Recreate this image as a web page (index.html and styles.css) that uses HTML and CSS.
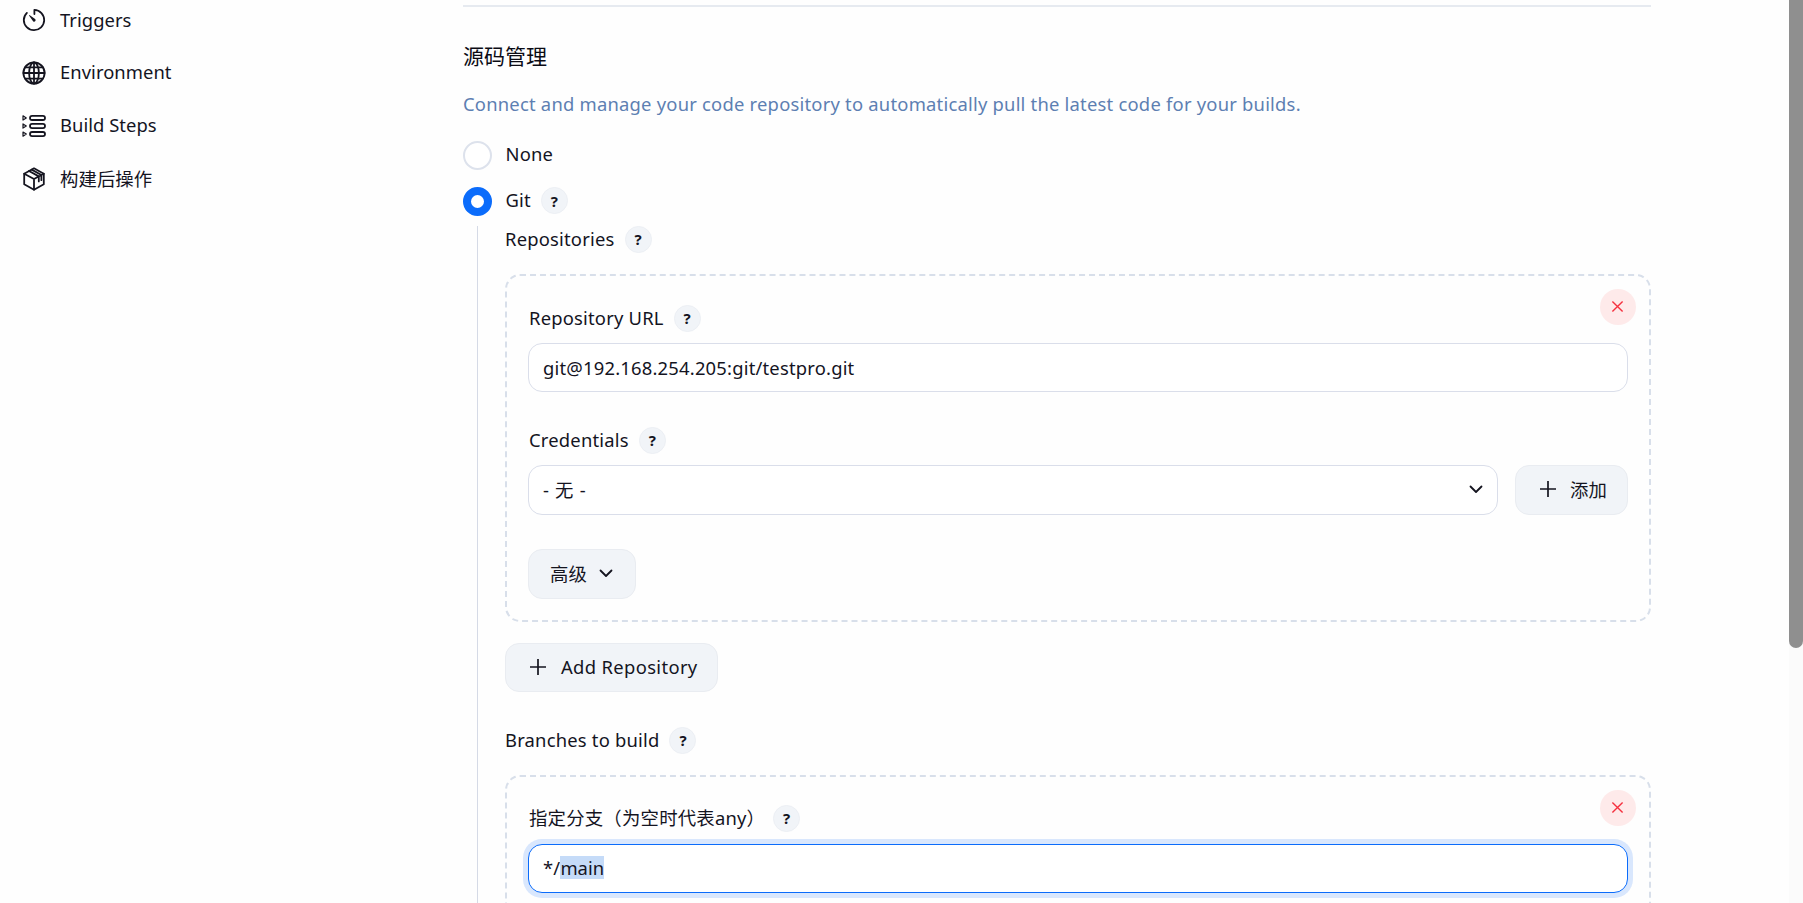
FILE: index.html
```html
<!DOCTYPE html>
<html lang="zh">
<head>
<meta charset="utf-8">
<title>Configure</title>
<link rel="stylesheet" href="styles.css">
</head>
<body>
<div class="page">
  <nav class="sidebar">
    <a class="nav-item"><svg class="nav-icon" viewBox="0 0 24 24"><path d="M4.9 4.9A10.2 10.2 0 0 0 1.8 12a10.2 10.2 0 1 0 10.6-10.2V6"/><path class="fill" d="M10.9 13.1 7.2 7.8c-.3-.4.2-.9.6-.6l5.3 3.7a1.55 1.55 0 0 1-1.8 2.5 1.6 1.6 0 0 1-.4-.3z"/></svg><span>Triggers</span></a>
    <a class="nav-item"><svg class="nav-icon" viewBox="0 0 24 24"><circle cx="12" cy="12" r="10.6"/><ellipse cx="12" cy="12" rx="4.9" ry="10.6"/><path d="M12 1.4v21.2M1.4 12h21.2M3.2 6.4h17.6M3.2 17.6h17.6"/></svg><span>Environment</span></a>
    <a class="nav-item"><svg class="nav-icon" viewBox="0 0 24 24"><rect x="8" y="1.8" width="15" height="4.2" rx="2.1"/><rect x="8" y="9.9" width="15" height="4.2" rx="2.1"/><rect x="8" y="18" width="15" height="4.2" rx="2.1"/><path class="thin" d="M1 1.8 4.3 3.9 1 6zM1 9.9 4.3 12 1 14.1zM1 18l3.3 2.1L1 22.2z"/></svg><span>Build Steps</span></a>
    <a class="nav-item"><svg class="nav-icon" viewBox="0 0 24 24"><path d="M12 1.3 21.8 6.7v10.6L12 22.7 2.2 17.3V6.7z"/><path d="M2.2 6.7 12 12l9.8-5.3M12 12v10.7M7 4l9.8 5.4v5M9.7 2.6l9.7 5.4v5.2"/></svg><span>构建后操作</span></a>
  </nav>

  <main class="content">
    <section class="scm">
      <h2 class="title">源码管理</h2>
      <p class="desc">Connect and manage your code repository to automatically pull the latest code for your builds.</p>

      <div class="radio-row"><span class="radio"></span><span class="text">None</span></div>
      <div class="radio-row second"><span class="radio on"></span><span class="text">Git</span><span class="help">?</span></div>

      <div class="nested">
        <div class="label-row"><span class="text">Repositories</span><span class="help">?</span></div>

        <div class="box first-box">
          <button class="close"><svg viewBox="0 0 14 14"><path d="M1.5 1.5l11 11M12.5 1.5l-11 11"/></svg></button>
          <div class="label-row"><span class="text">Repository URL</span><span class="help">?</span></div>
          <input class="input after-label" value="git@192.168.254.205:git/testpro.git" readonly>

          <div class="label-row spaced"><span class="text">Credentials</span><span class="help">?</span></div>
          <div class="cred-row after-label">
            <div class="select"><span class="none-option">- 无 -</span><svg class="chevron" viewBox="0 0 14 9"><path d="M1.5 1.5 7 7l5.5-5.5"/></svg></div>
            <button class="btn add-small"><svg class="plus" viewBox="0 0 16 16"><path d="M8 0v16M0 8h16"/></svg><span>添加</span></button>
          </div>

          <button class="btn advanced"><span>高级</span><svg class="chevron" viewBox="0 0 14 9"><path d="M1.5 1.5 7 7l5.5-5.5"/></svg></button>
        </div>

        <button class="btn add-repo"><svg class="plus" viewBox="0 0 16 16"><path d="M8 0v16M0 8h16"/></svg><span>Add Repository</span></button>

        <div class="label-row spaced"><span class="text">Branches to build</span><span class="help">?</span></div>

        <div class="box second-box">
          <button class="close"><svg viewBox="0 0 14 14"><path d="M1.5 1.5l11 11M12.5 1.5l-11 11"/></svg></button>
          <div class="label-row"><span class="text">指定分支（为空时代表any）</span><span class="help wide">?</span></div>
          <div class="input focused"><span>*/</span><span class="selected">main</span></div>
        </div>
      </div>
    </section>
  </main>
</div>
<div class="scrollbar"><div class="thumb"></div></div>
</body>
</html>
```
FILE: styles.css
```css
* { box-sizing: border-box; }
html, body { margin: 0; height: 903px; overflow: hidden; background: #fefefe; }
body {
  font-family: "Noto Sans", "Noto Sans CJK SC", sans-serif;
  font-size: 18.4px;
  letter-spacing: .2px;
  color: #14141f;
  position: relative;
}
.page { display: grid; grid-template-columns: 463px 1188px; height: 903px; }

.sidebar { display: flex; flex-direction: column; gap: 12.9px; padding-left: 22px; letter-spacing: .05px; }
.nav-item { display: flex; align-items: center; gap: 14px; height: 40px; }
.nav-item span { padding-bottom: 2px; }
.nav-icon { width: 24px; height: 24px; flex: none; fill: none; stroke: #14141f; stroke-width: 1.8; stroke-linecap: round; stroke-linejoin: round; }
.nav-icon .fill { fill: #14141f; stroke: none; }
.nav-icon .thin { stroke-width: 1.2; }

.content { padding-top: 5px; min-width: 0; }
.scm { border-top: 2px solid #e6eaf0; }
.title { margin: 34px 0 0; font-size: 21px; font-weight: 400; line-height: 30px; letter-spacing: 0; color: #0b0b14; }
.desc { margin: 19px 0 0; line-height: 28px; letter-spacing: .22px; color: #5d7fb2; }

.radio-row { display: flex; align-items: flex-start; height: 29px; margin-top: 23px; }
.radio-row.second { margin-top: 17px; }
.radio { width: 29px; height: 29px; border-radius: 50%; border: 2px solid #dde2ec; background: #fff; margin-right: 13.5px; flex: none; }
.radio.on { border: 8px solid #0b6cfb; }
.text { line-height: 26px; }
.help {
  display: inline-flex; align-items: center; justify-content: center;
  width: 27px; height: 27px; margin-left: 10px; border-radius: 50%;
  background: #f1f4f8; border: 1px solid #eceff4;
  font-size: 15px; font-weight: 700; color: #14141f; letter-spacing: 0;
}
.help.wide { margin-left: 8px; }

.nested { margin: 10px 0 0 14px; padding-left: 27px; border-left: 1px solid #d5dae6; }
.label-row { display: flex; align-items: center; height: 26px; }
.label-row.spaced { margin-top: 35px; }

.box { position: relative; border: 2px dashed #d8dfea; border-radius: 15px; padding: 29px 21px 21px 21px; margin-top: 22px; }
.box > .label-row { padding-left: 1px; }
.second-box { margin-top: 22px; padding-top: 28px; padding-bottom: 60px; }
.close {
  position: absolute; top: 13px; right: 13px; width: 36px; height: 36px; padding: 0 2px 1px 0;
  display: flex; align-items: center; justify-content: center;
  border: 0; border-radius: 50%; background: #feeaea;
}
.close svg { width: 13px; height: 13px; fill: none; stroke: #f5313f; stroke-width: 1.5; }

.input {
  display: flex; align-items: center; width: 100%; height: 49px; padding: 0 0 0 14px;
  border: 1.5px solid #dadeea; border-radius: 14px; background: #fff;
  font: inherit; letter-spacing: inherit; color: inherit; outline: 0;
}
.after-label { margin-top: 12px; }
.input.focused { margin-top: 13px; padding-bottom: 2px; border-color: #0b6cfb; box-shadow: 0 0 0 5px #d9e7fd; }
.selected { background: #c5dbf8; line-height: 23px; letter-spacing: .05px; }

.cred-row { display: flex; gap: 17px; height: 50px; }
.select {
  flex: 1; display: flex; align-items: center; justify-content: space-between;
  padding: 0 14px 2px; border: 1.5px solid #dadeea; border-radius: 14px; background: #fff;
}
.none-option { word-spacing: 1px; }
.chevron { width: 14px; height: 9px; fill: none; stroke: #14141f; stroke-width: 1.8; stroke-linecap: round; stroke-linejoin: round; }

.btn {
  display: inline-flex; align-items: center; height: 49px; padding: 0 20px 2px;
  border: 1.5px solid #e9ecf1; border-radius: 14px; background: #f1f4f8;
  font: inherit; letter-spacing: inherit; color: inherit; white-space: nowrap;
}
.plus { width: 16px; height: 16px; fill: none; stroke: #14141f; stroke-width: 1.7; flex: none; }
.add-small { width: 113px; height: 50px; padding-left: 24px; padding-right: 0; gap: 14px; }
.advanced { width: 108px; height: 50px; margin-top: 34px; padding-left: 21px; gap: 12px; display: flex; }
.add-repo { margin-top: 21px; width: 213px; padding-left: 24px; padding-right: 0; gap: 15px; letter-spacing: .35px; }

.scrollbar { position: absolute; top: 0; right: 0; width: 14px; height: 903px; background: #fbfbfb; }
.thumb { height: 648px; background: #8f8f8f; border-radius: 0 0 7px 7px; }
```
